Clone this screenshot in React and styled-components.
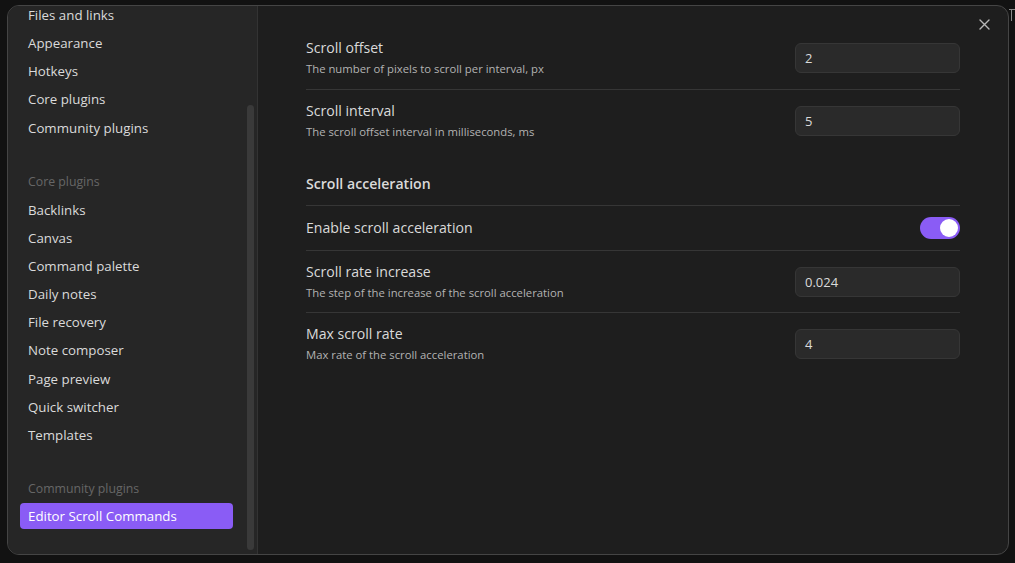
import React from "react";
import styled, { createGlobalStyle } from "styled-components";

const Global = createGlobalStyle`
  html, body { margin: 0; padding: 0; background: #121212; }
  body { font-family: "Open Sans", "Noto Sans", sans-serif; -webkit-font-smoothing: antialiased; }
  * { box-sizing: border-box; }
`;

const Page = styled.div`
  width: 1015px;
  height: 563px;
  display: flex;
  padding: 5px 0 8px 7px;
  overflow: hidden;
`;

const Modal = styled.div`
  position: relative;
  width: 1002px;
  height: 550px;
  display: flex;
  border: 1px solid #454545;
  border-radius: 12px;
  overflow: hidden;
  background: #1e1e1e;
`;

const Edge = styled.div`
  flex: 1;
  display: flex;
  justify-content: center;
  padding-top: 3px;
`;

const Sidebar = styled.div`
  width: 250px;
  flex: none;
  display: flex;
  background: #262626;
  border-right: 1px solid #333;
  overflow: hidden;
`;

const Nav = styled.nav`
  width: 225px;
  padding: 0 0 0 12px;
  margin-top: -5px;
  display: flex;
  flex-direction: column;
`;

const Track = styled.div`
  width: 24px;
  display: flex;
  justify-content: flex-end;
  padding: 99px 3px 4px 0;
`;

const Thumb = styled.div`
  width: 7px;
  height: 445px;
  border-radius: 4px;
  background: #3a3a3a;
`;

const Group = styled.div`
  display: flex;
  flex-direction: column;
  margin-top: ${(p) => (p.$first ? "0" : "25px")};
`;

const GroupTitle = styled.div`
  height: 29px;
  line-height: 29px;
  padding-left: 8px;
  font-size: 12.3px;
  color: #666;
`;

const Item = styled.div`
  height: ${(p) => (p.$active ? "26px" : "28.15px")};
  line-height: ${(p) => (p.$active ? "26px" : "28.15px")};
  margin-top: ${(p) => (p.$active ? "0.5px" : "0")};
  padding-left: 8px;
  font-size: 13.3px;
  border-radius: 4px;
  color: ${(p) => (p.$active ? "#fff" : "#dadada")};
  background: ${(p) => (p.$active ? "#8a5cf5" : "transparent")};
`;

const Main = styled.main`
  flex: 1;
  padding: 21px 48px 0 48px;
  display: flex;
  flex-direction: column;
`;

const Close = styled.div`
  position: absolute;
  top: 13px;
  right: 18px;
  width: 11px;
  height: 11px;
  display: flex;
`;

const Row = styled.div`
  display: flex;
  align-items: center;
  justify-content: space-between;
  padding: 11px 0 10.5px;
  border-top: ${(p) => (p.$first ? "none" : "1px solid #363636")};
`;

const Info = styled.div`
  display: flex;
  flex-direction: column;
`;

const Title = styled.div`
  font-size: 14.1px;
  line-height: 20px;
  color: #dadada;
`;

const Desc = styled.div`
  font-size: 11.3px;
  line-height: 18px;
  margin-top: 2px;
  color: #b3b3b3;
`;

const Heading = styled.div`
  padding: 23px 0 11px;
  font-size: 14.1px;
  line-height: 20px;
  font-weight: 600;
  color: #dadada;
`;

const Input = styled.div`
  width: 165px;
  height: 30px;
  border: 1px solid #363636;
  border-radius: 6px;
  background: #2a2a2a;
  padding-left: 9px;
  display: flex;
  align-items: center;
  font-size: 13px;
  color: #dadada;
`;

const Toggle = styled.div`
  width: 40px;
  height: 22px;
  border-radius: 11px;
  background: #8a5cf5;
  display: flex;
  justify-content: flex-end;
  align-items: center;
  padding-right: 2px;
`;

const Knob = styled.div`
  width: 18px;
  height: 18px;
  border-radius: 50%;
  background: #fff;
`;

const topItems = ["Files and links", "Appearance", "Hotkeys", "Core plugins", "Community plugins"];
const coreItems = [
  "Backlinks",
  "Canvas",
  "Command palette",
  "Daily notes",
  "File recovery",
  "Note composer",
  "Page preview",
  "Quick switcher",
  "Templates",
];

function Setting({ first, title, desc, value }) {
  return (
    <Row $first={first}>
      <Info>
        <Title>{title}</Title>
        <Desc>{desc}</Desc>
      </Info>
      <Input>{value}</Input>
    </Row>
  );
}

export default function App() {
  return (
    <>
      <Global />
      <Page>
        <Modal>
          <Sidebar>
            <Nav>
              <Group $first>
                {topItems.map((t) => (
                  <Item key={t}>{t}</Item>
                ))}
              </Group>
              <Group>
                <GroupTitle>Core plugins</GroupTitle>
                {coreItems.map((t) => (
                  <Item key={t}>{t}</Item>
                ))}
              </Group>
              <Group>
                <GroupTitle>Community plugins</GroupTitle>
                <Item $active>Editor Scroll Commands</Item>
              </Group>
            </Nav>
            <Track>
              <Thumb />
            </Track>
          </Sidebar>
          <Main>
            <Setting first title="Scroll offset" desc="The number of pixels to scroll per interval, px" value="2" />
            <Setting title="Scroll interval" desc="The scroll offset interval in milliseconds, ms" value="5" />
            <Heading>Scroll acceleration</Heading>
            <Row>
              <Title>Enable scroll acceleration</Title>
              <Toggle>
                <Knob />
              </Toggle>
            </Row>
            <Setting title="Scroll rate increase" desc="The step of the increase of the scroll acceleration" value="0.024" />
            <Setting title="Max scroll rate" desc="Max rate of the scroll acceleration" value="4" />
          </Main>
          <Close>
            <svg width="11" height="11" viewBox="0 0 11 11" fill="none" stroke="#b8b8b8" strokeWidth="1.4" strokeLinecap="round">
              <path d="M1 1 L10 10 M10 1 L1 10" />
            </svg>
          </Close>
        </Modal>
        <Edge>
          <svg width="6" height="14" viewBox="0 0 6 14" fill="none" stroke="#8a8a8a" strokeWidth="1">
            <path d="M0 1.5 H6 M2.5 1.5 V13" />
          </svg>
        </Edge>
      </Page>
    </>
  );
}
